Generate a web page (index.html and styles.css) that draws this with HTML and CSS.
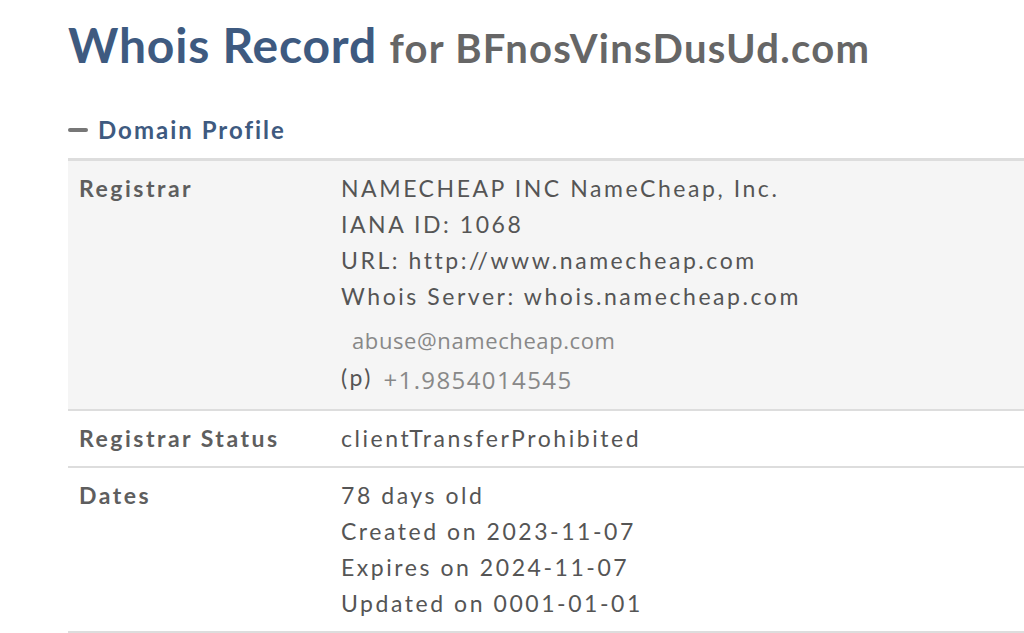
FILE: index.html
```html
<!DOCTYPE html>
<html lang="en">
<head>
    <meta charset="UTF-8">
    <meta name="viewport" content="width=device-width, initial-scale=1.0">
    <title>Whois Record for BFnosVinsDusUd.com</title>
    <link rel="stylesheet" href="styles.css">
</head>
<body>
    <div class="page">
        <h1 class="page-title">Whois Record <span class="domain">for BFnosVinsDusUd.com</span></h1>

        <div class="section">
            <h2 class="section-title"><span class="toggle"></span>Domain Profile</h2>
            <table class="profile">
                <tr class="shaded">
                    <td class="label">Registrar</td>
                    <td class="value">
                        <div>NAMECHEAP INC NameCheap, Inc.</div>
                        <div>IANA ID: 1068</div>
                        <div>URL: http:<span class="tight">/</span>/www.namecheap.com</div>
                        <div>Whois Server: whois.namecheap.com</div>
                        <div class="email">abuse@namecheap.com</div>
                        <div class="phone">(p) <span class="phone-num">+1.9854014545</span></div>
                    </td>
                </tr>
                <tr>
                    <td class="label">Registrar Status</td>
                    <td class="value">
                        <div>clientTransferProhibited</div>
                    </td>
                </tr>
                <tr>
                    <td class="label">Dates</td>
                    <td class="value">
                        <div>78 days old</div>
                        <div>Created on 2023-11-07</div>
                        <div>Expires on 2024-11-07</div>
                        <div>Updated on 0001-01-01</div>
                    </td>
                </tr>
            </table>
        </div>
    </div>
</body>
</html>
```

FILE: styles.css
```css
body {
    margin: 0;
    background-color: #fff;
    font-family: Lato, "Open Sans", sans-serif;
    color: #555;
    overflow: hidden;
}

.page {
    padding: 17px 0 0 68px;
}

.page-title {
    margin: 0;
    font-size: 48px;
    font-weight: bold;
    color: #3e5a80;
    letter-spacing: 0.8px;
    line-height: 56px;
    white-space: nowrap;
}

.page-title .domain {
    font-size: 40px;
    color: #666;
    letter-spacing: 1.3px;
}

.section {
    margin-top: 39px;
}

.section-title {
    display: flex;
    align-items: center;
    margin: 0 0 13px 0;
    font-size: 24px;
    font-weight: bold;
    color: #3e5a80;
    letter-spacing: 2px;
    line-height: 30px;
}

.toggle {
    display: inline-block;
    width: 20px;
    height: 4px;
    border-radius: 2px;
    background-color: #777;
    margin-right: 10px;
}

.profile {
    width: 1000px;
    border-collapse: collapse;
    border-top: 3px solid #ddd;
}

.profile tr {
    border-bottom: 2px solid #ddd;
}

.profile tr.shaded {
    background-color: #f5f5f5;
}

.profile td {
    vertical-align: top;
    padding: 9px 11px 10px 11px;
    font-size: 23px;
    line-height: 36px;
}

.profile .label {
    width: 240px;
    font-weight: bold;
    color: #5e5e5e;
    letter-spacing: 2.5px;
}

.profile .value {
    letter-spacing: 2.55px;
    color: #555;
}

.profile .value .tight {
    letter-spacing: -2px;
}

.email {
    margin-top: 8px;
    padding-left: 11px;
    font-family: "Open Sans", sans-serif;
    font-size: 22px;
    letter-spacing: 0.6px;
    color: #888;
}

.phone {
    line-height: 38px;
    padding-bottom: 3px;
}

.phone-num {
    position: relative;
    top: 3px;
    margin-left: 2px;
    font-family: "Open Sans", sans-serif;
    font-size: 24px;
    letter-spacing: 1.4px;
    color: #888;
}
```
